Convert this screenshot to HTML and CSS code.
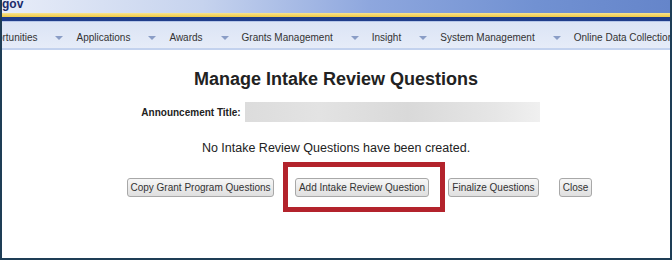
FILE: index.html
```html
<!DOCTYPE html>
<html lang="en">
<head>
    <meta charset="UTF-8">
    <meta name="viewport" content="width=device-width, initial-scale=1.0">
    <title>Manage Intake Review Questions</title>
    <link rel="stylesheet" href="styles.css">
</head>
<body>
    <div class="frame">
        <div class="banner">
            <span class="logo">gov</span>
        </div>
        <div class="stripe"></div>

        <nav class="menu">
            <span class="menu-item first">Opportunities</span>
            <span class="arrow"></span><span class="menu-item">Applications</span>
            <span class="arrow"></span><span class="menu-item">Awards</span>
            <span class="arrow"></span><span class="menu-item">Grants Management</span>
            <span class="arrow"></span><span class="menu-item">Insight</span>
            <span class="arrow"></span><span class="menu-item">System Management</span>
            <span class="arrow"></span><span class="menu-item">Online Data Collection</span>
        </nav>

        <div class="content">
            <h1>Manage Intake Review Questions</h1>

            <div class="field-row">
                <label class="field-label">Announcement Title:</label>
                <div class="field-value"></div>
            </div>

            <p class="empty-message">No Intake Review Questions have been created.</p>

            <div class="button-row">
                <button class="btn btn-copy">Copy Grant Program Questions</button>
                <span class="callout">
                    <button class="btn btn-add">Add Intake Review Question</button>
                </span>
                <button class="btn btn-finalize">Finalize Questions</button>
                <button class="btn btn-close">Close</button>
            </div>
        </div>
    </div>
</body>
</html>
```

FILE: styles.css
```css
body {
    margin: 0;
    padding: 0;
    font-family: 'Liberation Sans', Arial, sans-serif;
    background-color: white;
}

.frame {
    width: 672px;
    height: 260px;
    box-sizing: border-box;
    border: 2px solid #1e3d56;
    border-top: none;
    overflow: hidden;
    background-color: white;
}

.banner {
    height: 13px;
    background: linear-gradient(to right, #e8edf8 0%, #c6d3ee 30%, #8ea7de 55%, #7191d2 80%, #6585ca 100%);
    overflow: hidden;
}

.logo {
    display: block;
    font-size: 12px;
    font-weight: bold;
    line-height: 8px;
    color: #1c2d6b;
}

.stripe {
    height: 4px;
    background: linear-gradient(#f8e48e, #efc944);
    border-bottom: 4px solid #1f3d8a;
}

.menu {
    display: flex;
    align-items: center;
    height: 21px;
    padding-top: 5px;
    border-top: 1px solid #b5c6e8;
    border-bottom: 2px solid #c3d2ee;
    background: linear-gradient(#dbe4f5, #e6ecf8);
    font-size: 10px;
    color: #333;
    white-space: nowrap;
}

.menu-item {
    line-height: 21px;
}

.menu-item.first {
    margin-left: -24px;
}

.arrow {
    width: 0;
    height: 0;
    margin: 1px 13px 0 18px;
    border-left: 4px solid transparent;
    border-right: 4px solid transparent;
    border-top: 4px solid #8a9dc6;
}

.content {
    padding-top: 18px;
}

h1 {
    margin: 0;
    font-size: 18px;
    line-height: 22px;
    text-align: center;
    color: #222;
}

.field-row {
    display: flex;
    justify-content: center;
    align-items: center;
    margin-top: 12px;
    padding-left: 9px;
    height: 20px;
}

.field-label {
    font-size: 10px;
    font-weight: bold;
    color: #222;
    margin-right: 4px;
}

.field-value {
    width: 295px;
    height: 20px;
    background: linear-gradient(to right, #dcdcdc 0%, #e3e3e3 25%, #d9d9d9 55%, #e6e6e6 85%, #f0f0f0 100%);
}

.empty-message {
    margin: 18px 0 0;
    font-size: 12.5px;
    line-height: 16px;
    text-align: center;
    color: #222;
}

.button-row {
    display: flex;
    align-items: center;
    margin-top: 22px;
    padding-left: 125px;
}

.btn {
    height: 19px;
    padding: 0;
    font-family: 'Liberation Sans', Arial, sans-serif;
    font-size: 10px;
    color: #333;
    background: linear-gradient(#f7f7f7, #dfdfdf);
    border: 1px solid #a8a8a8;
    border-radius: 3px;
}

.btn-copy {
    width: 147px;
    margin-right: 21px;
}

.btn-add {
    width: 134px;
}

.btn-finalize {
    width: 91px;
    margin-left: 19px;
    margin-right: 20px;
}

.btn-close {
    width: 33px;
}

.callout {
    position: relative;
    display: flex;
}

.callout::after {
    content: "";
    position: absolute;
    top: -16px;
    left: -12px;
    right: -16px;
    bottom: -15px;
    border: 5px solid #b3232c;
}
```
